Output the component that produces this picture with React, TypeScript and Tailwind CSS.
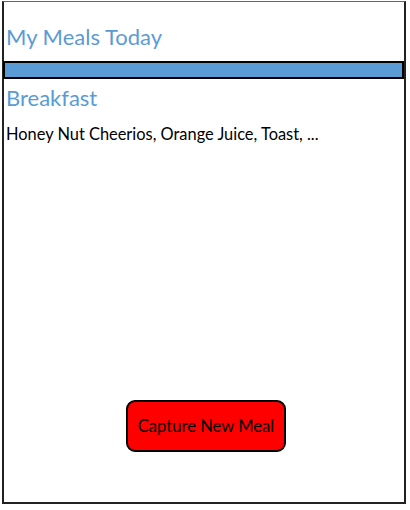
import React from "react";

export default function App() {
  return (
    <div className="w-[410px] h-[510px] bg-white" style={{ fontFamily: "Lato, 'Open Sans', sans-serif" }}>
      <div className="ml-[2px] mt-[1px] w-[404px] h-[503px] border-t border-t-[#666] border-l-2 border-r-2 border-b-2 border-l-[#222] border-r-[#222] border-b-[#222] flex flex-col">
        <div className="h-[59px] px-[2px] pt-[21px] text-[22px] leading-[28px] text-[#5b9bd5]">My Meals Today</div>
        <div className="-ml-[1px] w-[401px] h-[18px] border-2 border-black bg-[#5b9bd5]" />
        <div className="px-[2px] pt-[6px] text-[22px] leading-[26px] text-[#5b9bd5]">Breakfast</div>
        <div className="px-[2px] pt-[12px] text-[16.4px] leading-[22px] text-black">Honey Nut Cheerios, Orange Juice, Toast, ...</div>
        <div className="mt-auto mb-[50px] flex justify-center">
          <div className="ml-[4px] w-[160px] h-[52px] rounded-[9px] border-2 border-black bg-[#ff0000] flex items-center justify-center text-[16.6px] text-black">
            Capture New Meal
          </div>
        </div>
      </div>
    </div>
  );
}
